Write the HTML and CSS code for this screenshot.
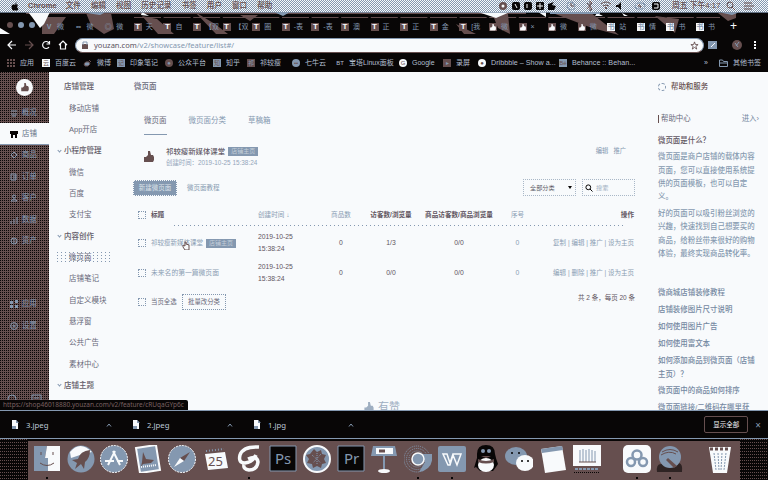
FILE: index.html
```html
<!DOCTYPE html>
<html lang="zh-CN">
<head>
<meta charset="utf-8">
<title>微页面</title>
<link rel="stylesheet" href="styles.css">
</head>
<body>
<svg width="0" height="0" class="defs">
  <defs>
    <symbol id="thumb" viewBox="0 0 10 12"><path d="M0 6h2l2-2V0h2l1 4h2l1 2v3l-1 2H0z" fill="currentColor"/></symbol>
    <symbol id="apple" viewBox="0 0 10 12"><path d="M5 3C6 1 7 0 7 0c0 2-1 3-2 3zM5 3.500c2-1 3.500-.5 4 .5-2 2-1 4 .5 5C8 12 7 12 5 11 3 12 2 12 .8 9 0 6 0 3 5 3.500z" fill="currentColor"/></symbol>
    <symbol id="file" viewBox="0 0 8 9"><path d="M1 0h4l2 2.500V9H1z" fill="#f8fafc"/><path d="M1 6h4v3H1zM5 0v3h3z" fill="#8498b0"/></symbol>
    <symbol id="up" viewBox="0 0 6 4"><path d="M1 3.500 3 1l2 2.500" fill="none" stroke="#8498b0"/></symbol>
  </defs>
</svg>
<div class="screen">
  <header class="menubar">
    <div class="menus"><svg class="apple"><use href="#apple"/></svg><b>Chrome</b><span>文件</span><span>编辑</span><span>视图</span><span>历史记录</span><span>书签</span><span>用户</span><span>窗口</span><span>帮助</span></div>
    <div class="status">
      <svg width="172" height="12" viewBox="0 0 172 12"><circle cx="5" cy="6" r="4" fill="#664f4f"/><circle cx="5" cy="6" r="1.500" fill="#f8fafc"/><g fill="#080606"><rect x="14" y="2" width="8" height="8" rx="2"/><rect x="26" y="2" width="8" height="8" rx="2"/><rect x="38" y="2" width="8" height="8" rx="1"/><path d="M50 4l6-2-2 3 4 1-2 4h-6z"/><path d="M118 5h2l3-3v8l-3-3h-2z"/><rect x="154" y="2" width="8" height="8" rx="2"/></g><path d="M17 4l2 4M29 4v4M39 6h6M42 3v6M156 4h4v4h-4" stroke="#f8fafc" fill="none"/><g fill="none" stroke="#664f4f"><circle cx="73" cy="6" r="4" stroke="#8498b0"/><path d="M73 3v3h3M89 3l5 6-2 2V1l2 2-5 6M103 4q5-4 10 0M105 6q3-2 6 0"/><path d="M107 8h2" stroke-width="2"/><rect x="137" y="3" width="10" height="6" rx="3" stroke="#8498b0"/><path d="M142 4l-2 2h3l-1 2"/></g></svg>
      <span>周五 下午4:17</span>
      <svg width="32" height="12" viewBox="0 0 32 12" fill="none" stroke="#664f4f"><circle cx="7" cy="5" r="3"/><path d="M9 7l3 3M21 3h8M21 6h10M21 9h8"/></svg>
    </div>
  </header>

  <div class="tabstrip">
    <svg class="wallpaper" viewBox="0 0 768 25" preserveAspectRatio="none"><path fill="#664f4f" d="M26 0h500v2H26zM42 5h24L54 22H42zM86 1h25l3 16-10 5-13-9zM142 4l15 3 17 15h-16zM195 0l20 12 13 10h-12zM240 3h18l-8 6zM456 12l20 10h-12zM492 1l16 1 2 20-12-6zM550 0h40l29 23-27-7zM655 4l24 3-4 14zM718 1h18v5l-8 3z"/><path stroke="#664f4f" stroke-dasharray="27 2.600" d="M134 5.500h586"/><path fill="#f8fafc" d="M28 0h22l-6 12-4 4-8-11zM0 16l10 6H0zM478 0h32l-14 6zM538 0h8v5zM597 1l6 3h-8zM622 1l6 3h-4zM142 0l7 4-8-1z"/><path fill="#8498b0" d="M0 0h768v.8H0zM80 0h26l-6 3zM274 0h16l-7 4zM550 0h50v2h-50zM718 0h22l-8 3z"/></svg>
    <div class="lights"><i></i><i></i><i></i></div>
    <div class="tabs">
      <div class="tab"><i class="plain">V</i><span>微</span></div><div class="tab"><i class="plain">∞</i><span>微</span></div><div class="tab"><i class="plain">◎</i><span>微</span></div>
      <div class="tab"><i>T</i><span>天</span></div><div class="tab"><i>T</i><span>自</span></div><div class="tab"><i>T</i><span>【双</span></div><div class="tab"><i>T</i><span>【双</span></div><div class="tab"><i>T</i><span>圈</span></div><div class="tab"><i>T</i><span>-表</span></div><div class="tab"><i>T</i><span>-表</span></div><div class="tab"><i>T</i><span>澳</span></div><div class="tab"><i>T</i><span>正</span></div><div class="tab"><i>T</i><span>正</span></div><div class="tab"><i>T</i><span>金</span></div><div class="tab"><i>T</i><span>[我</span></div>
      <div class="tab"><i><svg><use href="#thumb"/></svg></i><span>微</span></div><div class="tab"><i><svg><use href="#thumb"/></svg></i><span>×</span></div><div class="tab"><i><svg><use href="#thumb"/></svg></i><span>微</span></div><div class="tab"><i><svg><use href="#thumb"/></svg></i><span>微</span></div>
      <div class="tab"><i class="book">书</i><span>站</span></div><div class="tab"><i class="book">书</i><span>情</span></div><div class="tab"><i class="book">书</i><span>书</span></div><div class="tab"><i class="book">书</i><span>书</span></div>
    </div>
    <span class="newtab">+</span>
  </div>

  <div class="toolbar">
    <svg class="navicons" viewBox="0 0 75 16" fill="none" stroke="#f8fafc" stroke-width="1.200"><path d="M16 8H8m4-4L8 8l4 4"/><path stroke="#664f4f" d="M25 8h8m-4-4 4 4-4 4"/><path d="M49 6a3.500 3.500 0 1 0 0 4M49.500 4v3h-3M59 8l4-4 4 4M60.500 7v5h5V7"/></svg>
    <div class="omnibox"><svg width="8" height="8"><path d="M1 3h6v5H1z" fill="#664f4f"/><path d="M2 4V1h4v3" fill="none" stroke="#8498b0"/></svg><span class="host">youzan.com</span><span class="path">/v2/showcase/feature/list#/</span><svg class="star" width="9" height="9" viewBox="0 0 10 10"><path d="M5 1l1 3h3L6.500 6l1 3L5 7.200 2.500 9l1-3L1 4h3z" fill="none" stroke="#664f4f"/></svg></div>
    <svg class="ext" viewBox="0 0 62 16"><rect x="-4" y="4" width="9" height="8" fill="none"/><rect x="7" y="4" width="9" height="8" fill="#8498b0" transform="translate(-4)"/><path d="M6 10l4-4" stroke="#f8fafc"/><circle cx="32" cy="8" r="5" fill="#664f4f"/><path d="M30 6l3 4m1-5-3 4" stroke="#8498b0"/><path d="M49 4h2v2h-2zM49 7h2v2h-2zM49 10h2v2h-2z" fill="#f8fafc"/></svg>
  </div>

  <div class="bookmarks">
    <span class="bm b1"><i class="dots"></i>应用</span><span class="bm b2"><i class="sq white">云</i>百度云</span><span class="bm b3"><svg width="9" height="8"><path d="M1 5q1-3 5-2l1 2-2 2H2zM6 1l2 2" fill="#8498b0" stroke="#664f4f"/></svg>微博</span><span class="bm b4"><i class="sq blue">记</i>印象笔记</span><span class="bm b5"><i class="rd brown">●</i>公众平台</span><span class="bm b6"><i class="sq blue">知</i>知乎</span><span class="bm b7"><i class="sq brown">祁</i>祁较瘦</span><span class="bm b8"><i class="rd blue">••</i>七牛云</span><span class="bm b9"><i class="bt">BT</i>宝塔Linux面板</span><span class="bm b10"><i class="rd white">G</i>Google</span><span class="bm b11"><i class="sq brown">▸</i>录屏</span><span class="bm b12"><i class="rd white">●</i>Dribbble – Show a...</span><span class="bm b13"><i class="sq blue">Bē</i>Behance :: Behan...</span><span class="more">»</span><span class="bm other"><svg width="9" height="8"><path d="M.5 1h3l1 1.500h4v5h-8zM1 4h7" fill="none" stroke="#8498b0"/></svg>其他书签</span>
  </div>

  <div class="page">
    <nav class="rail">
      <div class="logo"><svg><use href="#thumb"/></svg></div>
      <a><svg viewBox="0 0 8 8"><path d="M1 2h6M1 5h6M2 7h4"/></svg>概况</a>
      <a class="on"><svg viewBox="0 0 8 8"><path d="M0 1h8v3H0zM1 4h6v4H5V5H3v3H1z" fill="#080606" stroke="none"/></svg>店铺</a>
      <a><svg viewBox="0 0 8 8"><path d="M1 4l3-3 3 3-3 3z"/></svg>商品</a>
      <a><svg viewBox="0 0 8 8"><path d="M1 1h5v6H1zM3 3h3M3 5h3"/></svg>订单</a>
      <a><svg viewBox="0 0 8 8"><circle cx="4" cy="2.500" r="1.500"/><path d="M1 7q3-4 6 0z"/></svg>客户</a>
      <a><svg viewBox="0 0 8 8"><path d="M1 5v3M4 3v5M7 1v7"/></svg>数据</a>
      <a><svg viewBox="0 0 8 8"><circle cx="4" cy="4" r="3"/><path d="M4 2v4"/></svg>资产</a>
      <a class="apps"><svg viewBox="0 0 8 8"><path d="M0 1h3v3H0zM5 0h3v3H5zM0 5h3v3H0zM5 5h3v3H5z" fill="#8498b0" stroke="none"/></svg>应用</a>
      <a><svg viewBox="0 0 8 8"><circle cx="4" cy="4" r="3.400"/><circle cx="4" cy="4" r="1"/></svg>设置</a>
      <div class="railfoot"><svg width="10" height="10" viewBox="0 0 10 10"><circle cx="5" cy="5" r="4"/></svg><svg width="11" height="10" viewBox="0 0 11 10"><path d="M1 1h9v8H1zM3 4h5"/></svg></div>
    </nav>
    <nav class="submenu">
      <b>店铺管理</b><a>移动店铺</a><a>App开店</a>
      <b><i></i>小程序管理</b><a>微信</a><a>百度</a><a>支付宝</a>
      <b><i></i>内容创作</b><a class="current">微页面</a><a>店铺笔记</a><a>自定义模块</a><a>悬浮窗</a><a>公共广告</a><a>素材中心</a>
      <b><i></i>店铺主题</b>
    </nav>
    <main>
      <h1>微页面</h1>
      <div class="pagetabs"><a class="sel">微页面</a><a>微页面分类</a><a>草稿箱</a></div>
      <section class="home"><svg><use href="#thumb"/></svg><div><div class="name">祁较瘦新媒体课堂<em>店铺主页</em></div><div class="time">创建时间：2019-10-25 15:38:24</div></div><div class="links"><a>编辑</a><a>推广</a></div></section>
      <div class="tools"><button>新建微页面</button><a>微页面教程</a><div class="select">全部分类<i></i></div><div class="search"><svg width="8" height="8" viewBox="0 0 8 8"><circle cx="3.300" cy="3.300" r="2.400" fill="none" stroke="#080606"/><path d="M5 5l2.500 2.500" stroke="#080606"/></svg>搜索</div></div>
      <div class="row head"><i class="box"></i><b>标题</b><span class="lt">创建时间 ↓</span><span class="lt">商品数</span><b>访客数/浏览量</b><b>商品访客数/商品浏览量</b><span class="lt">序号</span><b class="r">操作</b></div>
      <div class="row"><i class="box"></i><span class="lt ttl">祁较瘦新媒体课堂<em>店铺主页</em></span><span>2019-10-25<br>15:38:24</span><span>0</span><span>1/3</span><span>0/0</span><span class="lt">0</span><span class="lt r">复制 | 编辑 | 推广 | 设为主页</span></div>
      <div class="row second"><i class="box"></i><span class="lt">未来名的第一篇微页面</span><span>2019-10-25<br>15:38:24</span><span>0</span><span>0/0</span><span>0/0</span><span class="lt">0</span><span class="lt r">编辑 | 删除 | 推广 | 设为主页</span></div>
      <div class="batch"><i class="box"></i><span>当页全选</span><span class="change">批量改分类</span><span class="total">共 2 条，每页 20 条</span></div>
      <div class="brand"><svg><use href="#thumb"/></svg>有赞</div>
      <svg class="cursor" viewBox="0 0 8 9"><path d="M3 1v4L1 4v2l2 3h4V4L4 3V1z" fill="#f8fafc" stroke="#664f4f"/></svg>
    </main>
    <aside>
      <h2><i></i>帮助和服务</h2>
      <div class="center"><span>帮助中心</span><a>进入›</a></div>
      <h3>微页面是什么？</h3>
      <p>微页面是商户店铺的载体内容<br>页面，您可以直接使用系统提<br>供的页面模板，也可以自定<br>义。</p>
      <p>好的页面可以吸引粉丝浏览的<br>兴趣，快速找到自己想要买的<br>商品，给粉丝带来很好的购物<br>体验，最终实现商品转化率。</p>
      <ul><li>微商城店铺装修教程</li><li>店铺装修图片尺寸说明</li><li>如何使用图片广告</li><li>如何使用富文本</li><li>如何添加商品到微页面（店铺<br>主页）？</li><li>微页面中的商品如何排序</li><li>微页面链接/二维码在哪里获</li></ul>
    </aside>
    <div class="urltip">https://shop46018880.youzan.com/v2/feature/cRUqaGYp6c</div>
  </div>

  <div class="downloads"><div class="dl"><svg><use href="#file"/></svg><span>3.jpeg</span><svg class="up"><use href="#up"/></svg></div><div class="dl"><svg><use href="#file"/></svg><span>2.jpeg</span><svg class="up"><use href="#up"/></svg></div><div class="dl"><svg><use href="#file"/></svg><span>1.jpg</span><svg class="up"><use href="#up"/></svg></div><button>显示全部</button><span class="x">×</span></div>

  <div class="desktop"><div class="dock">
    <div class="app run"><svg viewBox="0 0 28 28"><path fill="#8498b0" d="M1 1h13l-2 12h3v13H1z"/><path fill="#f8fafc" d="M14 1h13v25H15V13h-3z"/><path d="M8 7v3M20 7v3M7 18q7 5 14 0" stroke="#664f4f" fill="none"/></svg></div>
    <div class="app"><svg viewBox="0 0 28 28"><circle cx="14" cy="14" r="13.500" fill="#8498b0"/><path d="M3 7q10-12 22 0l-12 3-9 3z" fill="#f8fafc"/><path d="M23 5q-10 1-12 9l-6 1 5 3-2 6 6-5 3 5 1-7q5-4 5-12z" fill="#664f4f"/></svg></div>
    <div class="app"><svg viewBox="0 0 28 28"><circle cx="14" cy="14" r="13.500" fill="#8498b0" stroke="#f8fafc" stroke-dasharray="2 1"/><path d="M13 6l7 14M15 6 8 20M5 16h9M17 16h6" stroke="#f8fafc" stroke-width="2"/></svg></div>
    <div class="app"><svg viewBox="0 0 28 28"><path d="M2 3l20-3 4 25-20 3z" fill="#8498b0" stroke="#f8fafc" stroke-width="2"/><path d="M9 7l3 7 8 1-3 3-8 1-2 3 1-5z" fill="#664f4f"/><path d="M7 22l15-2" stroke="#f8fafc" stroke-width="2" stroke-dasharray="1 1"/></svg></div>
    <div class="app"><svg viewBox="0 0 28 28"><circle cx="14" cy="14" r="13.500" fill="#8498b0" stroke="#f8fafc" stroke-dasharray="2 1"/><path d="M22 7l-6 9-4-3z" fill="#664f4f"/><path d="M6 22l6-9 4 3z" fill="#f8fafc"/></svg></div>
    <div class="app"><svg viewBox="0 0 28 28"><path d="M3 9l20-2 3 16-20 2z" fill="#f8fafc"/><path d="M4 6l18-2" stroke="#8498b0" stroke-dasharray="1 2" stroke-width="2"/><text x="6" y="21" font-size="13" fill="#664f4f">25</text></svg></div>
    <div class="app run"><svg viewBox="0 0 28 28"><path d="M24 2Q8 1 5 10q-2 8 5 8 8-1 11-8M13 14q9-4 10 3-1 8-9 8-6-1-5-5" stroke="#f8fafc" stroke-width="3.500" fill="none"/></svg></div>
    <div class="app"><svg viewBox="0 0 28 28"><path d="M1 1h26v25H1z" fill="#080606" stroke="#8498b0"/><text x="6" y="19" font-size="15" fill="#8498b0">Ps</text></svg></div>
    <div class="app"><svg viewBox="0 0 28 28"><circle cx="14" cy="14" r="13" fill="#8498b0" stroke="#f8fafc" stroke-width="2"/><path d="M11 4l3 3 4-2 1 4 4 1-2 4 2 4-4 1-1 4-4-2-4 2-1-4-5-1 2-4-3-4 4-1z" fill="#664f4f"/><path d="M9 10l9 8M18 9l-8 9M14 8v11" stroke="#8498b0" stroke-dasharray="1 1"/></svg></div>
    <div class="app"><svg viewBox="0 0 28 28"><path d="M1 1h26v25H1z" fill="#080606" stroke="#8498b0"/><text x="7" y="19" font-size="15" fill="#8498b0">Pr</text></svg></div>
    <div class="app"><svg viewBox="0 0 28 28"><path d="M3 1h22l2 10H1z" fill="#8498b0"/><path d="M6 3h17v6H6z" fill="#f8fafc"/><path d="M9 6h6" stroke="#664f4f" stroke-width="3"/><path d="M14 11v13" stroke="#8498b0" stroke-width="2"/><ellipse cx="14" cy="26" rx="6" ry="2" fill="#f8fafc"/></svg></div>
    <div class="app run"><svg viewBox="0 0 28 28"><g fill="none" stroke="#8498b0" stroke-dasharray="1 1"><circle cx="13" cy="14" r="13"/><circle cx="13" cy="14" r="10.500"/><circle cx="13" cy="14" r="8"/></g><path d="M18 9h10q2 15-13 18l6-10z" fill="#8498b0"/><circle cx="14" cy="14" r="6" fill="#8498b0" stroke="#f8fafc" stroke-width="1.500"/></svg></div>
    <div class="app run"><svg viewBox="0 0 28 28"><rect y="1" width="28" height="26" rx="2" fill="#8498b0"/><path d="M5 9h4l3 9 3-9h8l-4 11-4-10-3 10h-2z" fill="none" stroke="#f8fafc" stroke-width="1.500"/></svg></div>
    <div class="app"><svg viewBox="0 0 28 28"><path d="M5 9q0-9 9-9t9 9q1 5 3 10l-2 3-3 4H8l-4-4-2 1 3-10z" fill="#080606"/><ellipse cx="14" cy="20" rx="8" ry="7" fill="#f8fafc"/><path d="M6 14q8 4 16 0v3q-8 3-16 0z" fill="#664f4f"/><circle cx="11" cy="6" r="2" fill="#8498b0"/><circle cx="17" cy="6" r="2" fill="#8498b0"/><path d="M9 11h10l-5 2z" fill="#664f4f"/></svg></div>
    <div class="app"><svg viewBox="0 0 28 28"><ellipse cx="11" cy="11" rx="11" ry="9" fill="#8498b0"/><circle cx="7" cy="8" r="1"/><circle cx="14" cy="8" r="1"/><ellipse cx="20" cy="18" rx="9" ry="8" fill="#f8fafc"/><circle cx="17" cy="16" r="1"/><circle cx="23" cy="16" r="1"/></svg></div>
    <div class="app"><svg viewBox="0 0 28 28"><path d="M2 4l21-3 4 24-21 3z" fill="#f8fafc"/><path d="M2 4l21-3 1 4L3 8z" fill="#8498b0"/></svg></div>
    <div class="app"><svg viewBox="0 0 28 28"><path d="M0 0h28v21H0z" fill="#f8fafc"/><path d="M7 5v12M10 4v13M13 5v12M16 4v13M19 5v12M22 6v11" stroke="#8498b0"/><path d="M6 17h17" stroke="#664f4f"/><path d="M2 24h24" stroke="#8498b0" stroke-width="2" stroke-dasharray="3 1"/><path d="M1 28h26" stroke="#080606" stroke-width="2" stroke-dasharray="1 1"/></svg></div>
    <div class="app run gap"><svg viewBox="0 0 28 28"><rect width="28" height="28" rx="5" fill="#f8fafc"/><g fill="none" stroke="#8498b0" stroke-width="2.500"><circle cx="14" cy="10" r="4.500"/><circle cx="8" cy="17" r="4"/><circle cx="20" cy="17" r="4"/></g></svg></div>
    <div class="app run"><svg viewBox="0 0 28 28"><path d="M1 27q-1-8 4-8l18-1q4 1 3 9z" fill="#080606" opacity=".6"/><circle cx="14" cy="12" r="11" fill="#8498b0"/><path d="M6 7q8-5 16 0M5 10q8-5 15-1" stroke="#664f4f" fill="none"/><path d="M12 13l9 8-3 2-8-8z" fill="#664f4f"/></svg></div>
    <div class="app trash"><svg viewBox="0 0 28 28"><path d="M3 2h22l-4 26H7z" fill="#f8fafc"/><path d="M4 4h20" stroke="#664f4f" stroke-width="3" stroke-dasharray="3 2"/><path d="M8 8l2 17M12 8l1 17M16 8l-1 17M20 8l-2 17" stroke="#8498b0" stroke-dasharray="2 1"/></svg></div>
  </div></div>
</div>
</body>
</html>
```
FILE: styles.css
```css
* { box-sizing: border-box; }
:root { --k: #080606; --n: #664f4f; --b: #8498b0; --w: #f8fafc; --mid: #68697a; }
body { margin: 0; font: 7.5px/10px "Liberation Sans", "Noto Sans CJK SC", sans-serif; color: var(--mid); }
i, em { font-style: normal; }
.defs { position: absolute; }
.screen { width: 768px; height: 480px; overflow: hidden; background: var(--k); display: flex; flex-direction: column; white-space: nowrap; }
.screen > * { flex: none; }

.menubar { height: 12px; display: flex; justify-content: space-between; align-items: center; color: var(--n); font-size: 7.600px; font-weight: 500; background: repeating-conic-gradient(var(--b) 0 25%, var(--w) 0 50%) 0 0 / 2px 2px; }
.menus { display: flex; align-items: center; gap: 10px; padding-left: 11px; }
.menus b { color: var(--n); margin-right: -1px; }
.apple { width: 8px; height: 9px; color: var(--k); margin-right: -1px; }
.status { display: flex; align-items: center; gap: 2px; padding-right: 13px; font-size: 7.800px; }
.status span { width: 49px; }

.tabstrip { height: 25px; display: flex; align-items: center; position: relative; }
.wallpaper { position: absolute; left: 0; top: 0; width: 768px; height: 25px; }
.lights { position: relative; width: 45px; padding-left: 7px; display: flex; gap: 5px; }
.lights i { width: 6px; height: 6px; border-radius: 50%; background: var(--b); }
.lights i:first-child { background: var(--n); }
.tabs { position: relative; display: grid; grid-template-columns: repeat(23, 29.600px); width: 682px; height: 17px; align-items: end; }
.tab { display: flex; gap: 4px; align-items: center; height: 12px; overflow: hidden; color: var(--b); font-size: 7px; }
.tab i { flex: none; width: 8px; height: 8px; background: var(--n); color: var(--w); display: grid; place-items: center; font: bold 8px/8px "Liberation Sans", "Noto Sans CJK SC", sans-serif; }
.tab i.plain { background: none; color: var(--b); font-size: 7px; }
.tab i.book { background: var(--w); color: var(--b); font-size: 7px; }
.tab svg { width: 6px; height: 7px; }
.newtab { position: relative; color: var(--w); font-size: 12px; margin: 2px 0 0 3px; }

.toolbar { height: 16px; display: flex; align-items: center; }
.navicons { width: 75px; height: 16px; }
.omnibox { width: 629px; height: 15px; border-radius: 8px; background: var(--w); border: 1px solid var(--b); border-bottom-color: var(--n); display: flex; align-items: center; padding: 0 4px 0 5px; font: 7.550px/12px "Noto Sans", sans-serif; }
.host { margin-left: 5px; color: #5b535c; }
.path { color: var(--b); }
.star { margin-left: auto; }
.ext { width: 64px; height: 16px; }

.bookmarks { height: 19px; display: grid; grid-template-columns: 35px 41px 34px 48px 48px 34px 45px 44px 63px 44px 35px 81px 145px 15px 1fr; padding-left: 7px; align-items: center; color: #b2bfd0; font-size: 7px; }
.bm { display: flex; align-items: center; gap: 5px; }
.bm i { width: 8px; height: 8px; font-size: 6px; line-height: 8px; text-align: center; overflow: hidden; flex: none; }
.dots { background: conic-gradient(at 2px 2px, transparent 75%, var(--n) 0) 0 0 / 3px 3px; }
.rd { border-radius: 50%; }
.white { background: var(--w); color: var(--n); }
.blue { background: var(--b); color: var(--n); }
.brown { background: var(--n); color: var(--b); }
.b12, .b13 { font-size: 7.200px; }

.page { height: 339px; display: flex; background: var(--w); position: relative; overflow: hidden; border-bottom: 1px solid var(--b); }
.rail { width: 49px; flex: none; background: conic-gradient(var(--n) 75%, var(--k) 0) 0 0 / 2px 2px; display: flex; flex-direction: column; }
.logo { width: 17px; height: 17px; margin: 7px 0 6px 16px; border-radius: 50%; background: var(--w); color: var(--n); display: grid; place-items: center; flex: none; }
.logo svg { width: 8px; height: 9px; }
.rail a { height: 21.400px; flex: none; display: flex; align-items: center; gap: 4px; padding-left: 10px; color: var(--b); }
.rail a svg { width: 8px; height: 8px; fill: none; stroke: currentColor; }
.rail a.on { background: var(--w); color: #657285; border-bottom: 1px solid var(--b); }
.rail a.apps { margin-top: 42px; }
.railfoot { margin-top: 57px; padding-left: 7px; display: flex; gap: 14px; fill: none; stroke: var(--b); }
.submenu { width: 77px; flex: none; padding-top: 4.500px; display: flex; flex-direction: column; }
.submenu a, .submenu b { height: 21.350px; flex: none; display: flex; align-items: center; padding-left: 20px; }
.submenu b { padding-left: 15px; position: relative; font-weight: 500; color: #635c68; }
.submenu i { position: absolute; left: 9px; top: 8px; width: 3px; height: 3px; border: solid var(--b); border-width: 0 1px 1px 0; transform: rotate(45deg); }
.submenu .current { margin: 4.650px 0 4.700px 8px; height: 12px; width: 55px; padding-left: 12px; background: conic-gradient(at 1px 1px, transparent 75%, var(--b) 0) 0 0 / 4px 3px; }

main { width: 524px; flex: none; padding-left: 8px; position: relative; }
h1, h2, h3, p, ul { margin: 0; padding: 0; font-size: inherit; list-style: none; font-weight: 500; }
h1 { height: 30px; line-height: 30px; }
.pagetabs { display: flex; gap: 22px; padding-left: 10px; margin-top: 10px; height: 23px; color: var(--b); }
.pagetabs a { height: 23px; padding-top: 4px; }
.pagetabs .sel { border-bottom: 1px solid var(--b); color: var(--mid); }
.home { margin-top: 11px; height: 22px; padding-left: 10px; display: flex; }
.home > svg { width: 10px; height: 12px; margin: 5px 12px 0 0; color: var(--n); }
.name { display: flex; align-items: center; line-height: 10px; font-weight: 500; color: #655d69; height: 11px; font-size: 7.400px; }
em { display: inline-block; background: var(--b); color: #c3ced9; width: 30px; height: 9px; line-height: 8px; margin-left: 3px; text-align: center; font-size: 6px; font-weight: 400; }
.time { color: #93a5ba; font-size: 6.400px; line-height: 12px; }
.links { margin-left: auto; padding-right: 24px; display: flex; gap: 5px; color: var(--b); font-size: 6.300px; }
.tools { margin-top: 11px; height: 17px; display: flex; align-items: center; }
.tools button { width: 44px; height: 16px; padding: 0; margin: 0 10px 0 -1px; border: 1px dotted var(--w); background: var(--b); color: #dce3ea; font: inherit; font-size: 6.500px; }
.tools a { color: #879ab1; font-size: 6.500px; }
.select, .search { height: 17px; width: 53px; border: 1px dotted #a9b7c7; display: flex; align-items: center; padding-left: 6px; font-size: 6.200px; color: #5c5a66; }
.select { margin-left: auto; }
.select i { margin-left: 13px; border: 2px solid transparent; border-top: 3px solid var(--k); border-bottom: 0; }
.search { margin: 0 15px 0 6px; padding-left: 2px; gap: 3px; color: #a4b2c4; }
.row { display: grid; grid-template-columns: 13px 107px 62px 42px 58px 78px 39px 97px; align-items: center; justify-items: center; height: 30px; padding-left: 4px; font-size: 6.800px; color: #5f5560; }
.row > :nth-child(-n+3) { justify-self: start; }
.row .r { justify-self: end; }
.row.head { height: 24px; padding-bottom: 3px; margin-top: 8px; font-size: 6.600px; position: relative; }
.row.head::after { content: ""; position: absolute; left: 40px; right: 25px; top: 21px; height: 1px; background: linear-gradient(90deg, var(--b) 1px, transparent 1px) 0 0 / 4px 1px; }
.row b { font-weight: 600; }
.lt { color: #8a9db3; }
.row:not(.head) { line-height: 12px; }
.row:not(.head) .r { font-size: 6.500px; }
.row .ttl { display: flex; align-items: center; font-size: 6.500px; }
.box { width: 8px; height: 8px; border: 1px dotted var(--b); }
.batch { height: 27px; display: flex; align-items: center; padding-left: 4px; font-size: 6.400px; }
.batch > span:nth-child(2) { margin-left: 5px; width: 31px; }
.change { border: 1px dotted var(--b); padding: 2px 5px; width: 44px; height: 16px; }
.total { margin: -8px 15px 0 auto; color: #5f5560; font-size: 6.500px; }
.brand { display: flex; gap: 4px; align-items: center; color: #9eaec1; font-size: 11px; line-height: 14px; margin: 85px 0 0 230px; }
.brand svg { width: 10px; height: 11px; }
.cursor { position: absolute; left: 56px; top: 169px; width: 8px; height: 9px; }

aside { width: 118px; flex: none; padding: 0 10px 0 8px; line-height: 13.300px; color: #7488a1; font-size: 7.450px; }
aside h2 { height: 30px; line-height: 30px; display: flex; align-items: center; color: var(--n); gap: 5px; }
aside h2 i { width: 8px; height: 8px; border-radius: 50%; border: 1px dashed var(--b); }
.center { display: flex; justify-content: space-between; height: 14px; margin-top: 10px; }
.center span { border-left: 1px solid var(--n); height: 8px; line-height: 8px; margin-top: 3px; padding-left: 2px; color: var(--mid); }
.center a { margin-right: -1px; }
aside h3 { margin: 7.500px 0 3.600px; color: #5f5560; }
aside p { margin-bottom: 3.500px; color: #879ab1; }
aside ul { padding-top: 22.500px; }
aside li { margin-bottom: 3.700px; }
.urltip { position: absolute; left: 0; bottom: -1px; height: 11px; width: 188px; border-radius: 0 2px 0 0; background: var(--k); color: #7a6161; padding-left: 3px; font: 6.500px/10px "Noto Sans", sans-serif; }

.downloads { height: 28px; display: flex; align-items: center; color: #bcc8d5; font: 7.800px/10px "Noto Sans", "Noto Sans CJK SC", sans-serif; border-bottom: 1px solid var(--b); }
.dl { width: 121px; padding-left: 11px; display: flex; align-items: center; }
.dl svg { width: 8px; height: 9px; }
.dl span { width: 80px; margin-left: 7px; }
.dl .up { width: 6px; height: 4px; }
.downloads button { margin-left: auto; width: 44px; height: 17px; border: 1px solid var(--n); border-radius: 2px; background: none; color: var(--w); font: inherit; font-size: 6.500px; padding: 0; }
.x { font-size: 10px; margin: 0 7px 0 7px; color: var(--b); }

.desktop { height: 41px; background: conic-gradient(at 1px 1px, var(--k) 75%, var(--n) 0) 0 0 / 2px 3px; padding-left: 28px; }
.dock { width: 712px; height: 41px; background: var(--n); border-top: 2px solid var(--k); display: flex; padding-left: 2px; }
.app { width: 33.750px; flex: none; display: flex; flex-direction: column; align-items: center; padding-top: 4px; gap: 4px; }
.app svg { width: 28px; height: 28px; }
.app text { font-family: "Noto Sans", sans-serif; }
.run::after { content: ""; width: 2px; height: 2px; background: var(--k); }
.gap { margin-left: 16px; }
.trash { margin-left: 16px; }
```
